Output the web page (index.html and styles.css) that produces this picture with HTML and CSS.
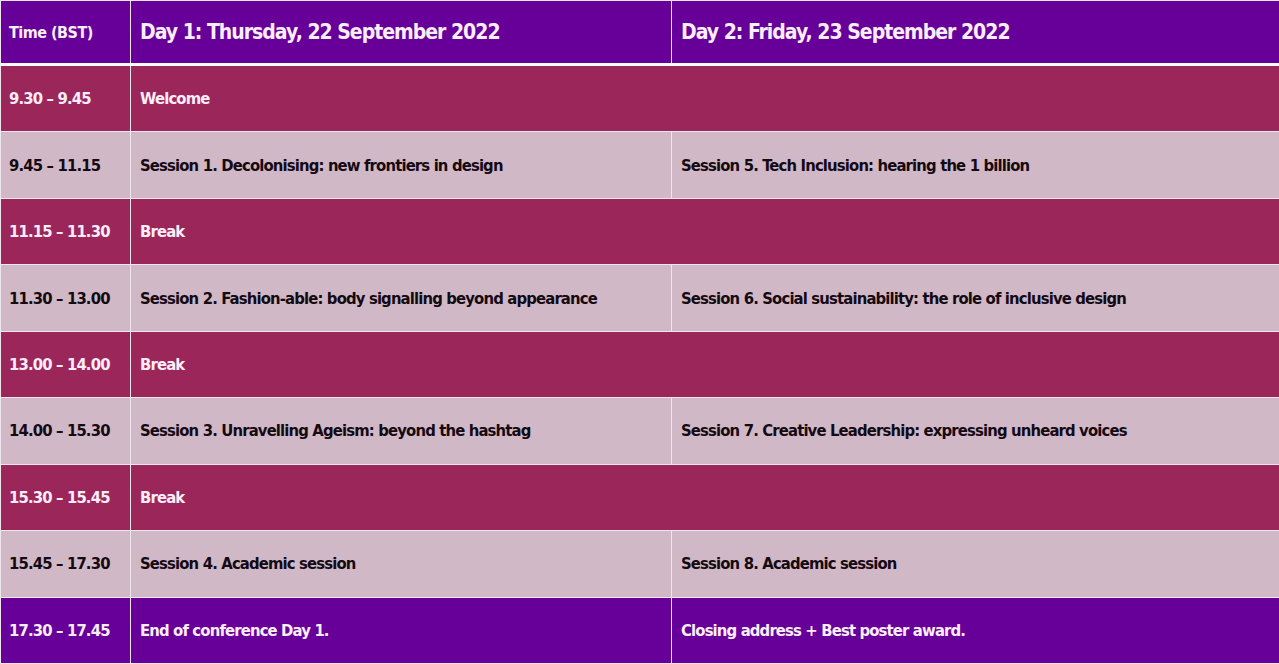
FILE: index.html
```html
<!DOCTYPE html>
<html>
<head>
<meta charset="utf-8">
<link rel="stylesheet" href="styles.css">
</head>
<body>
<table class="schedule">
  <colgroup>
    <col class="c-time">
    <col class="c-day1">
    <col class="c-day2">
  </colgroup>
  <thead>
    <tr class="head">
      <th class="time-head">Time (BST)</th>
      <th>Day 1: Thursday, 22 September 2022</th>
      <th>Day 2: Friday, 23 September 2022</th>
    </tr>
  </thead>
  <tbody>
    <tr class="dark"><td>9.30 – 9.45</td><td colspan="2">Welcome</td></tr>
    <tr class="light"><td>9.45 – 11.15</td><td>Session 1. Decolonising: new frontiers in design</td><td>Session 5. Tech Inclusion: hearing the 1 billion</td></tr>
    <tr class="dark"><td>11.15 – 11.30</td><td colspan="2">Break</td></tr>
    <tr class="light"><td>11.30 – 13.00</td><td>Session 2. Fashion-able: body signalling beyond appearance</td><td>Session 6. Social sustainability: the role of inclusive design</td></tr>
    <tr class="dark"><td>13.00 – 14.00</td><td colspan="2">Break</td></tr>
    <tr class="light"><td>14.00 – 15.30</td><td>Session 3. Unravelling Ageism: beyond the hashtag</td><td>Session 7. Creative Leadership: expressing unheard voices</td></tr>
    <tr class="dark"><td>15.30 – 15.45</td><td colspan="2">Break</td></tr>
    <tr class="light"><td>15.45 – 17.30</td><td>Session 4. Academic session</td><td>Session 8. Academic session</td></tr>
    <tr class="purple"><td>17.30 – 17.45</td><td>End of conference Day 1.</td><td>Closing address + Best poster award.</td></tr>
  </tbody>
</table>
</body>
</html>
```
FILE: styles.css
```css
html, body {
  margin: 0;
  padding: 0;
  background: #ffffff;
}
.schedule {
  width: 1279px;
  height: 664px;
  border-collapse: collapse;
  table-layout: fixed;
  font-family: "DejaVu Sans Condensed", "DejaVu Sans", sans-serif;
  font-stretch: condensed;
  font-weight: bold;
}
.c-time { width: 130px; }
.c-day1 { width: 541px; }
.c-day2 { width: 608px; }
.schedule th,
.schedule td {
  border: 1px solid #f2e6ee;
  padding: 0 9px;
  text-align: left;
  vertical-align: middle;
  white-space: nowrap;
  overflow: hidden;
}
.schedule th:first-child,
.schedule td:first-child {
  padding-left: 8px;
}
.head th {
  background: #660099;
  color: #fbeefb;
  height: 62px;
  font-size: 21px;
  letter-spacing: -1px;
  border-bottom: 3px solid #ffffff;
}
.head .time-head {
  font-size: 16px;
  letter-spacing: -0.5px;
}
.schedule td {
  font-size: 16.5px;
  letter-spacing: -0.85px;
  height: 64px;
}
.dark td {
  background: #9b2659;
  color: #fbeefb;
}
.light td {
  background: #d1b8c7;
  color: #140a12;
}
.purple td {
  background: #660099;
  color: #fbeefb;
}
```
